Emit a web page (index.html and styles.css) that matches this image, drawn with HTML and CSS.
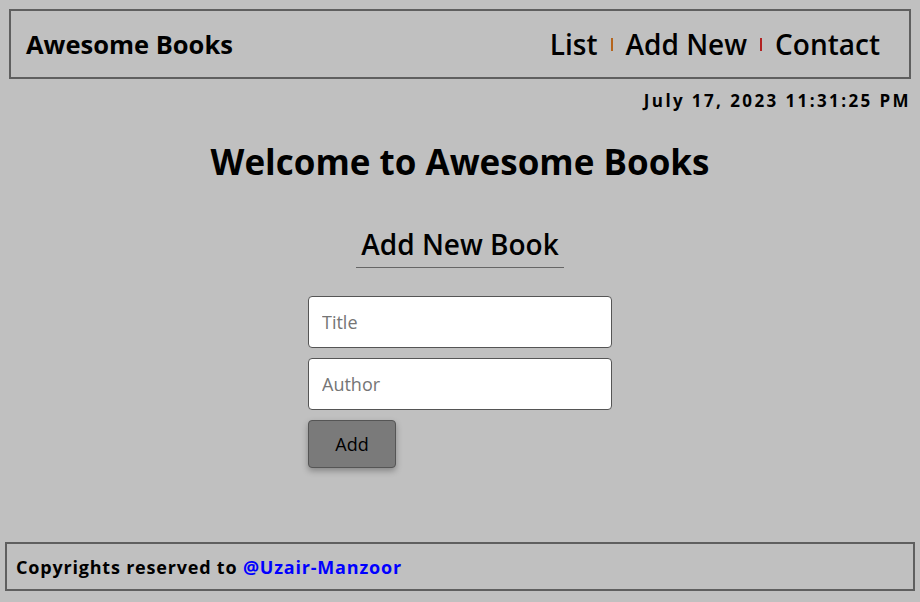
FILE: index.html
```html
<!DOCTYPE html>
<html lang="en">
<head>
<meta charset="utf-8">
<title>Awesome Books</title>
<link rel="stylesheet" href="styles.css">
</head>
<body>
<div class="page">
  <header class="header">
    <h1 class="brand">Awesome Books</h1>
    <nav class="nav">
      <a class="nav-link" href="#">List</a>
      <span class="sep sep-1"></span>
      <a class="nav-link" href="#">Add New</a>
      <span class="sep sep-2"></span>
      <a class="nav-link" href="#">Contact</a>
    </nav>
  </header>
  <div class="date">July 17, 2023 11:31:25 PM</div>
  <main class="main">
    <h2 class="welcome">Welcome to Awesome Books</h2>
    <h3 class="section-title">Add New Book</h3>
    <form class="form">
      <input class="field" type="text" placeholder="Title">
      <input class="field" type="text" placeholder="Author">
      <button class="btn" type="button">Add</button>
    </form>
  </main>
  <footer class="footer">
    <p class="copy">Copyrights reserved to <a class="author" href="#">@Uzair-Manzoor</a></p>
  </footer>
</div>
</body>
</html>
```
FILE: styles.css
```css
* { box-sizing: border-box; }
html, body { margin: 0; padding: 0; }
body {
  background: #c0c0c0;
  font-family: "Comic Sans MS", "Open Sans", sans-serif;
  color: #000;
  width: 920px;
  height: 602px;
  overflow: hidden;
}
.page {
  display: flex;
  flex-direction: column;
  height: 602px;
}
.header {
  margin: 9px 9px 0 9px;
  height: 70px;
  border: 2px solid #5f5f5f;
  display: flex;
  align-items: center;
  justify-content: space-between;
  padding: 0 29px 0 15px;
}
.brand {
  margin: 0;
  font-size: 25.5px;
  font-weight: 700;
}
.nav {
  display: flex;
  align-items: center;
  gap: 13px;
}
.nav-link {
  color: #000;
  text-decoration: none;
  font-size: 28px;
  font-weight: 600;
}
.sep {
  width: 2px;
  height: 13px;
}
.sep-1 { background: #b5651d; }
.sep-2 { background: #b22222; }
.date {
  text-align: right;
  padding-right: 9px;
  margin-top: 10px;
  font-size: 17px;
  font-weight: 700;
  letter-spacing: 2.4px;
}
.main {
  display: flex;
  flex-direction: column;
  align-items: center;
  flex: 1;
}
.welcome {
  margin: 26px 0 0 0;
  font-size: 35px;
  font-weight: 700;
}
.section-title {
  margin: 40px 0 0 0;
  font-size: 28px;
  font-weight: 600;
  padding: 0 5px 4px;
  border-bottom: 1px solid #666;
}
.form {
  margin-top: 28px;
  width: 304px;
  display: flex;
  flex-direction: column;
  align-items: flex-start;
  gap: 10px;
}
.field {
  width: 304px;
  height: 52px;
  border: 1px solid #555;
  border-radius: 4px;
  background: #fff;
  padding: 0 13px;
  font-family: inherit;
  font-size: 18px;
}
.field::placeholder { color: #757575; }
.btn {
  width: 88px;
  height: 48px;
  background: #7a7a7a;
  border: 1px solid #555;
  border-radius: 4px;
  box-shadow: 0 3px 6px rgba(0,0,0,0.3);
  font-family: inherit;
  font-size: 18px;
  color: #000;
}
.footer {
  margin: 0 5px 11px 5px;
  height: 49px;
  border: 2px solid #5f5f5f;
  display: flex;
  align-items: center;
  padding: 0 9px;
}
.copy {
  margin: 0;
  font-size: 18px;
  font-weight: 700;
  letter-spacing: 0.8px;
}
.author {
  color: #0000ff;
  text-decoration: none;
}
```
